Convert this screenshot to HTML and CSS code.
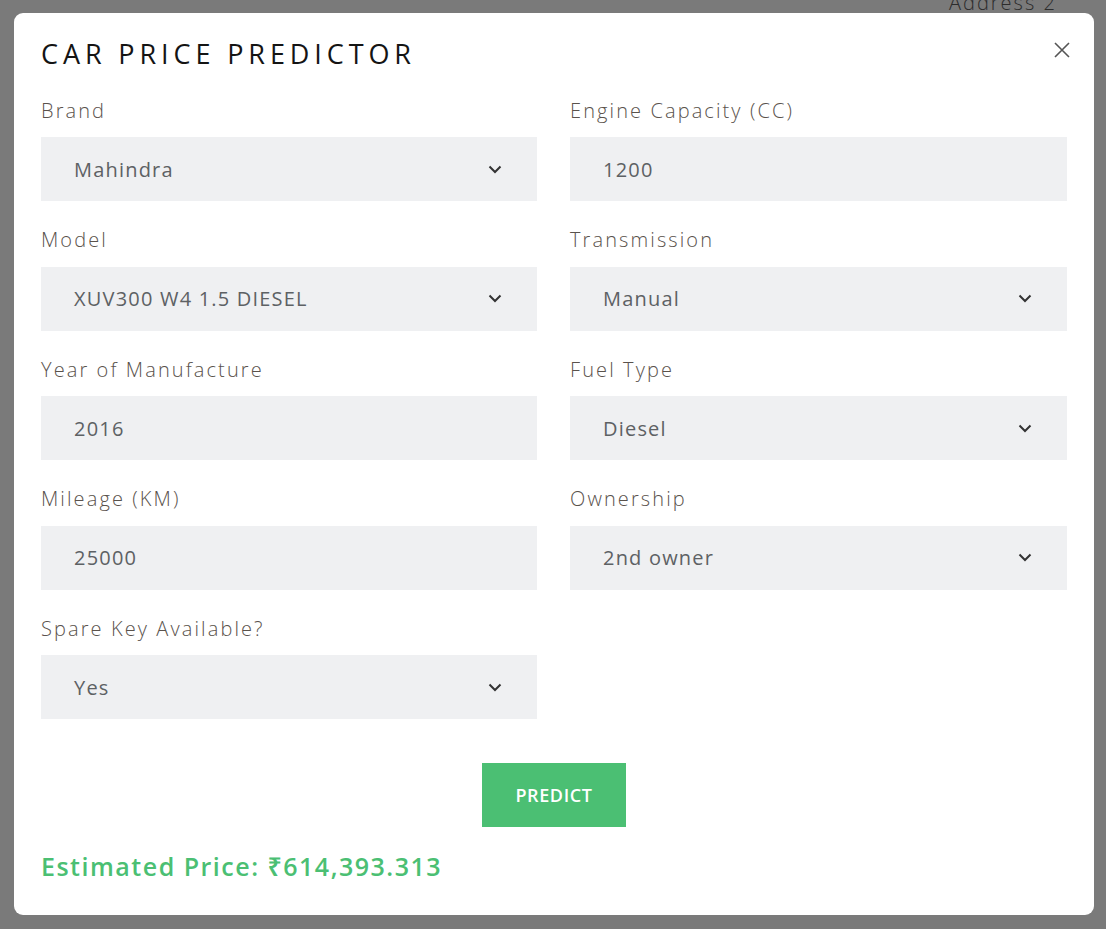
FILE: index.html
```html
<!DOCTYPE html>
<html lang="en">
<head>
<meta charset="utf-8">
<title>Car Price Predictor</title>
<link rel="stylesheet" href="styles.css">
</head>
<body>
<div class="page-behind">
  <span class="behind-label">Address 2</span>
</div>
<div class="backdrop">
  <div class="modal">
    <div class="modal-header">
      <h1 class="modal-title">CAR PRICE PREDICTOR</h1>
      <button class="close" aria-label="Close">
        <svg width="18" height="18" viewBox="0 0 18 18"><path d="M2 2 L16 16 M16 2 L2 16" stroke="#555" stroke-width="1.6" fill="none"/></svg>
      </button>
    </div>
    <div class="form-grid">
      <div class="field">
        <label class="label">Brand</label>
        <div class="control select">Mahindra<svg class="chev" width="14" height="9" viewBox="0 0 14 9"><path d="M1.5 1.5 L7 7 L12.5 1.5" stroke="#333" stroke-width="2" fill="none"/></svg></div>
      </div>
      <div class="field">
        <label class="label">Engine Capacity (CC)</label>
        <div class="control">1200</div>
      </div>
      <div class="field">
        <label class="label">Model</label>
        <div class="control select">XUV300 W4 1.5 DIESEL<svg class="chev" width="14" height="9" viewBox="0 0 14 9"><path d="M1.5 1.5 L7 7 L12.5 1.5" stroke="#333" stroke-width="2" fill="none"/></svg></div>
      </div>
      <div class="field">
        <label class="label">Transmission</label>
        <div class="control select">Manual<svg class="chev" width="14" height="9" viewBox="0 0 14 9"><path d="M1.5 1.5 L7 7 L12.5 1.5" stroke="#333" stroke-width="2" fill="none"/></svg></div>
      </div>
      <div class="field">
        <label class="label">Year of Manufacture</label>
        <div class="control">2016</div>
      </div>
      <div class="field">
        <label class="label">Fuel Type</label>
        <div class="control select">Diesel<svg class="chev" width="14" height="9" viewBox="0 0 14 9"><path d="M1.5 1.5 L7 7 L12.5 1.5" stroke="#333" stroke-width="2" fill="none"/></svg></div>
      </div>
      <div class="field">
        <label class="label">Mileage (KM)</label>
        <div class="control">25000</div>
      </div>
      <div class="field">
        <label class="label">Ownership</label>
        <div class="control select">2nd owner<svg class="chev" width="14" height="9" viewBox="0 0 14 9"><path d="M1.5 1.5 L7 7 L12.5 1.5" stroke="#333" stroke-width="2" fill="none"/></svg></div>
      </div>
      <div class="field">
        <label class="label">Spare Key Available?</label>
        <div class="control select">Yes<svg class="chev" width="14" height="9" viewBox="0 0 14 9"><path d="M1.5 1.5 L7 7 L12.5 1.5" stroke="#333" stroke-width="2" fill="none"/></svg></div>
      </div>
    </div>
    <div class="actions">
      <button class="predict">PREDICT</button>
    </div>
    <p class="result">Estimated Price: ₹614,393.313</p>
  </div>
</div>
</body>
</html>
```

FILE: styles.css
```css
* { box-sizing: border-box; }
html, body {
  margin: 0;
  padding: 0;
  width: 1106px;
  height: 929px;
  overflow: hidden;
  background: #7a7a7a;
  font-family: "Open Sans", "Noto Sans", sans-serif;
}
.page-behind {
  position: absolute;
  top: 0;
  left: 0;
  right: 0;
  height: 13px;
  overflow: hidden;
}
.behind-label {
  position: absolute;
  left: 949px;
  top: -11px;
  font-size: 20px;
  font-weight: 300;
  letter-spacing: 2px;
  color: #2c2c2c;
}
.backdrop {
  padding: 13px 12px 14px 14px;
}
.modal {
  background: #fff;
  border-radius: 9px;
  width: 1080px;
  height: 902px;
  padding: 22px 27px 0 27px;
}
.modal-header {
  display: flex;
  justify-content: space-between;
  align-items: flex-start;
}
.modal-title {
  margin: 0;
  font-size: 27px;
  font-weight: 500;
  letter-spacing: 4.9px;
  color: #141414;
  line-height: 38px;
}
.close {
  background: none;
  border: 0;
  padding: 0;
  margin: 6px -4px 0 0;
  width: 18px;
  height: 18px;
  cursor: pointer;
}
.close svg { display: block; }
.form-grid {
  display: grid;
  grid-template-columns: 496px 497px;
  column-gap: 33px;
  row-gap: 28px;
  margin-top: 26.5px;
}
.field {
  display: flex;
  flex-direction: column;
}
.label {
  font-size: 20px;
  font-weight: 300;
  letter-spacing: 2.1px;
  color: #5a524c;
  line-height: 22px;
  margin-bottom: 15.5px;
}
.control {
  height: 64px;
  background: #eff0f2;
  display: flex;
  align-items: center;
  justify-content: space-between;
  padding: 0 35px 0 33px;
  font-size: 20px;
  font-weight: 400;
  letter-spacing: 1.2px;
  color: #5d6164;
}
.chev { display: block; }
.actions {
  display: flex;
  justify-content: center;
  margin-top: 44px;
}
.predict {
  width: 144px;
  height: 64px;
  background: #4bbf73;
  color: #fff;
  border: 0;
  font-family: "Open Sans", "Noto Sans", sans-serif;
  font-size: 18px;
  font-weight: 600;
  letter-spacing: 0.6px;
  cursor: pointer;
}
.result {
  margin: 22px 0 0 0;
  font-size: 25px;
  font-weight: 600;
  letter-spacing: 1.5px;
  color: #4bbf73;
}
```
